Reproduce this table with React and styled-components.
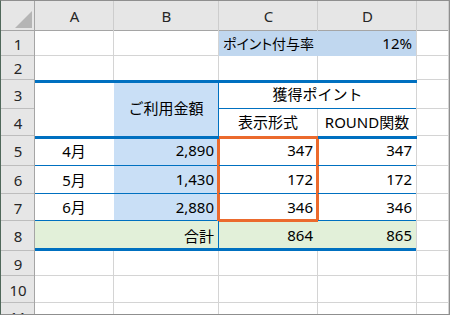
import React from "react";
import styled, { createGlobalStyle } from "styled-components";

const GlobalStyle = createGlobalStyle`
  html, body {
    margin: 0;
    padding: 0;
    background: #fff;
  }
  body {
    font-family: "Noto Sans", "Noto Sans CJK JP", sans-serif;
  }
`;

const GRID = "#d4d4d4";
const BLUE = "#0070c0";
const ORANGE = "#eb6a2d";
const FILL_BLUE = "#c9dff6";
const FILL_ROW1 = "#c0d7ef";
const FILL_GREEN = "#e2f0d9";

const Frame = styled.div`
  width: 450px;
  height: 315px;
  box-sizing: border-box;
  border: 1px solid #8f8f8f;
  border-left-color: #50685a;
  overflow: hidden;
  background: #fff;
`;

const Sheet = styled.div`
  display: grid;
  grid-template-columns: 34px 79px 105px 99px 99px 1fr;
  grid-template-rows: 30px 25px 24px 29px 27px 30px 28px 27px 30px 25px 27px 28px;
  font-size: 15px;
  color: #000;
`;

const Corner = styled.div`
  display: flex;
  align-items: flex-end;
  justify-content: flex-end;
  padding: 0 3px 3px 0;
  background: #e6e6e6;
  box-shadow: inset -1px 0 0 #a5a5a5, inset 0 -1px 0 #a5a5a5;
`;

const ColHead = styled.div`
  display: flex;
  align-items: center;
  justify-content: center;
  background: #e6e6e6;
  color: #262626;
  box-shadow: inset -1px 0 0 #cdcdcd, inset 0 -1px 0 #a5a5a5;
`;

const RowHead = styled.div`
  grid-column: 1;
  grid-row: ${(p) => p.$row};
  display: flex;
  align-items: center;
  justify-content: center;
  background: #e6e6e6;
  color: #262626;
  box-shadow: inset -1px 0 0 #a5a5a5, inset 0 -1px 0 #bdbdbd;
`;

const justify = { left: "flex-start", right: "flex-end", center: "center" };

const Cell = styled.div`
  grid-column: ${(p) => p.$col} / span ${(p) => p.$w || 1};
  grid-row: ${(p) => p.$row} / span ${(p) => p.$h || 1};
  display: flex;
  align-items: center;
  justify-content: ${(p) => justify[p.$align || "left"]};
  padding: 0 5px 2px 4px;
  background: ${(p) => p.$bg || "#fff"};
  box-shadow: ${(p) => p.$edges};
  white-space: nowrap;
  font-size: ${(p) => (p.$small ? "14px" : "15px")};
  font-feature-settings: ${(p) => (p.$small ? '"palt"' : "normal")};
`;

// t / r / b / l : [width, color]
const edges = ({ t, r, b, l }) => {
  const s = [];
  if (t) s.push(`inset 0 ${t[0]}px 0 ${t[1]}`);
  if (r) s.push(`inset -${r[0]}px 0 0 ${r[1]}`);
  if (b) s.push(`inset 0 -${b[0]}px 0 ${b[1]}`);
  if (l) s.push(`inset ${l[0]}px 0 0 ${l[1]}`);
  return s.length ? s.join(", ") : "none";
};

const g = [1, GRID];
const thinBlue = [1, BLUE];
const thickBlue = [3, BLUE];
const plain = { r: g, b: g };

const cols = ["A", "B", "C", "D", ""];

// row is the sheet row number, col is 1 = A ... 5 = E
const cells = [
  { row: 1, col: 1, e: plain },
  { row: 1, col: 2, e: plain },
  { row: 1, col: 3, bg: FILL_ROW1, e: {}, text: "ポイント付与率", small: true },
  { row: 1, col: 4, bg: FILL_ROW1, e: { r: g }, text: "12%", align: "right" },
  { row: 1, col: 5, e: plain },

  { row: 2, col: 1, e: { r: g } },
  { row: 2, col: 2, e: { r: g } },
  { row: 2, col: 3, e: { r: g } },
  { row: 2, col: 4, e: { r: g } },
  { row: 2, col: 5, e: plain },

  { row: 3, col: 1, h: 2, e: { t: thickBlue } },
  { row: 3, col: 2, h: 2, bg: FILL_BLUE, e: { t: thickBlue, r: thinBlue }, text: "ご利用金額", align: "center" },
  { row: 3, col: 3, w: 2, e: { t: thickBlue, b: thinBlue, r: g }, text: "獲得ポイント", align: "center" },
  { row: 3, col: 5, e: plain },

  { row: 4, col: 3, e: { r: g }, text: "表示形式", align: "center" },
  { row: 4, col: 4, e: { r: g }, text: "ROUND関数", align: "center" },
  { row: 4, col: 5, e: plain },

  { row: 5, col: 1, e: { t: thickBlue, b: thinBlue }, text: "4月", align: "center" },
  { row: 5, col: 2, bg: FILL_BLUE, e: { t: thickBlue, b: thinBlue, r: [2, ORANGE] }, text: "2,890", align: "right" },
  { row: 5, col: 3, e: { t: [3, ORANGE], l: [1, ORANGE], r: [2, ORANGE], b: thinBlue }, text: "347", align: "right" },
  { row: 5, col: 4, e: { t: thickBlue, l: [1, ORANGE], b: thinBlue, r: g }, text: "347", align: "right" },
  { row: 5, col: 5, e: plain },

  { row: 6, col: 1, e: { b: thinBlue }, text: "5月", align: "center" },
  { row: 6, col: 2, bg: FILL_BLUE, e: { b: thinBlue, r: [2, ORANGE] }, text: "1,430", align: "right" },
  { row: 6, col: 3, e: { l: [1, ORANGE], r: [2, ORANGE], b: thinBlue }, text: "172", align: "right" },
  { row: 6, col: 4, e: { l: [1, ORANGE], b: thinBlue, r: g }, text: "172", align: "right" },
  { row: 6, col: 5, e: plain },

  { row: 7, col: 1, e: { b: thinBlue }, text: "6月", align: "center" },
  { row: 7, col: 2, bg: FILL_BLUE, e: { b: thinBlue, r: [2, ORANGE] }, text: "2,880", align: "right" },
  { row: 7, col: 3, e: { l: [1, ORANGE], r: [2, ORANGE], b: [2, ORANGE] }, text: "346", align: "right" },
  { row: 7, col: 4, e: { l: [1, ORANGE], b: thinBlue, r: g }, text: "346", align: "right" },
  { row: 7, col: 5, e: plain },

  { row: 8, col: 1, w: 2, bg: FILL_GREEN, e: { r: thinBlue, b: thickBlue }, text: "合計", align: "right" },
  { row: 8, col: 3, bg: FILL_GREEN, e: { t: [1, ORANGE], b: thickBlue }, text: "864", align: "right" },
  { row: 8, col: 4, bg: FILL_GREEN, e: { b: thickBlue, r: g }, text: "865", align: "right" },
  { row: 8, col: 5, e: plain },
];

for (let row = 9; row <= 11; row++) {
  for (let col = 1; col <= 5; col++) cells.push({ row, col, e: plain });
}

const App = () => {
  return (
    <>
      <GlobalStyle />
      <Frame>
        <Sheet>
          <Corner>
            <svg width="17" height="17" viewBox="0 0 17 17">
              <polygon points="17,0 17,17 0,17" fill="#b5b5b5" />
            </svg>
          </Corner>
          {cols.map((c, i) => (
            <ColHead key={i}>{c}</ColHead>
          ))}
          {Array.from({ length: 11 }, (_, i) => (
            <RowHead key={i} $row={i + 2}>
              {i + 1}
            </RowHead>
          ))}
          {cells.map((c, i) => (
            <Cell
              key={i}
              $row={c.row + 1}
              $col={c.col + 1}
              $w={c.w}
              $h={c.h}
              $bg={c.bg}
              $align={c.align}
              $small={c.small}
              $edges={edges(c.e)}
            >
              {c.text}
            </Cell>
          ))}
        </Sheet>
      </Frame>
    </>
  );
};

export default App;
